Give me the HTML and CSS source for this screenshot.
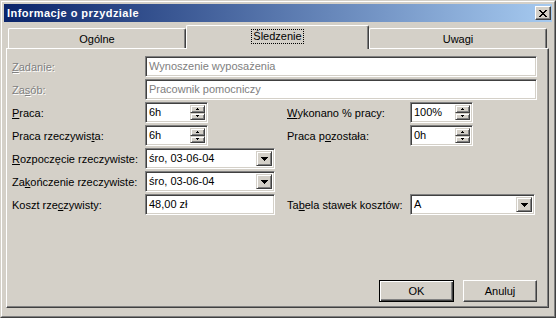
FILE: index.html
```html
<!DOCTYPE html>
<html lang="pl">
  <head>
    <meta charset="UTF-8" />
    <title>Informacje o przydziale</title>
    <link rel="stylesheet" href="styles.css">
  </head>
  <body>
    <div class="window">
      <div class="frame">
        <div class="titlebar">
          <span class="title">Informacje o przydziale</span>
          <div class="close">
            <svg width="8" height="7" viewBox="0 0 8 7" shape-rendering="crispEdges">
              <path d="M0 0h2v1H0zM6 0h2v1H6zM1 1h2v1H1zM5 1h2v1H5zM2 2h4v1H2zM3 3h2v1H3zM2 4h4v1H2zM1 5h2v1H1zM5 5h2v1H5zM0 6h2v1H0zM6 6h2v1H6z" fill="#000" />
            </svg>
          </div>
        </div>

        <div class="content">
          <div class="tabs">
            <div class="tab">Ogólne</div>
            <div class="tab active"><span class="focus">Śledzenie</span></div>
            <div class="tab">Uwagi</div>
          </div>

          <div class="panel">
            <div class="form">
              <div class="label disabled"><u>Z</u>adanie:</div>
              <div class="field wide"><span class="val gray">Wynoszenie wyposażenia</span></div>

              <div class="label disabled">Za<u>s</u>ób:</div>
              <div class="field wide"><span class="val gray">Pracownik pomocniczy</span></div>

              <div class="label"><u>P</u>raca:</div>
              <div class="field spin">
                <span class="val">6h</span>
                <div class="spin-btns">
                  <div class="raised"><svg width="3" height="2" viewBox="0 0 3 2" shape-rendering="crispEdges"><path d="M1 0h1v1H1zM0 1h3v1H0z" /></svg></div>
                  <div class="raised"><svg width="3" height="2" viewBox="0 0 3 2" shape-rendering="crispEdges"><path d="M0 0h3v1H0zM1 1h1v1H1z" /></svg></div>
                </div>
              </div>
              <div class="label right"><u>W</u>ykonano % pracy:</div>
              <div class="field spin">
                <span class="val">100%</span>
                <div class="spin-btns">
                  <div class="raised"><svg width="3" height="2" viewBox="0 0 3 2" shape-rendering="crispEdges"><path d="M1 0h1v1H1zM0 1h3v1H0z" /></svg></div>
                  <div class="raised"><svg width="3" height="2" viewBox="0 0 3 2" shape-rendering="crispEdges"><path d="M0 0h3v1H0zM1 1h1v1H1z" /></svg></div>
                </div>
              </div>

              <div class="label">Praca rzeczywis<u>t</u>a:</div>
              <div class="field spin">
                <span class="val">6h</span>
                <div class="spin-btns">
                  <div class="raised"><svg width="3" height="2" viewBox="0 0 3 2" shape-rendering="crispEdges"><path d="M1 0h1v1H1zM0 1h3v1H0z" /></svg></div>
                  <div class="raised"><svg width="3" height="2" viewBox="0 0 3 2" shape-rendering="crispEdges"><path d="M0 0h3v1H0zM1 1h1v1H1z" /></svg></div>
                </div>
              </div>
              <div class="label right">Praca p<u>o</u>została:</div>
              <div class="field spin">
                <span class="val">0h</span>
                <div class="spin-btns">
                  <div class="raised"><svg width="3" height="2" viewBox="0 0 3 2" shape-rendering="crispEdges"><path d="M1 0h1v1H1zM0 1h3v1H0z" /></svg></div>
                  <div class="raised"><svg width="3" height="2" viewBox="0 0 3 2" shape-rendering="crispEdges"><path d="M0 0h3v1H0zM1 1h1v1H1z" /></svg></div>
                </div>
              </div>

              <div class="label"><u>R</u>ozpoczęcie rzeczywiste:</div>
              <div class="field combo">
                <span class="val">śro, 03-06-04</span>
                <div class="raised drop"><svg width="7" height="4" viewBox="0 0 7 4" shape-rendering="crispEdges"><path d="M0 0h7v1H0zM1 1h5v1H1zM2 2h3v1H2zM3 3h1v1H3z" /></svg></div>
              </div>

              <div class="label">Za<u>k</u>ończenie rzeczywiste:</div>
              <div class="field combo">
                <span class="val">śro, 03-06-04</span>
                <div class="raised drop"><svg width="7" height="4" viewBox="0 0 7 4" shape-rendering="crispEdges"><path d="M0 0h7v1H0zM1 1h5v1H1zM2 2h3v1H2zM3 3h1v1H3z" /></svg></div>
              </div>

              <div class="label">Koszt rze<u>c</u>zywisty:</div>
              <div class="field text"><span class="val">48,00 zł</span></div>
              <div class="label right">Ta<u>b</u>ela stawek kosztów:</div>
              <div class="field combo rate">
                <span class="val">A</span>
                <div class="raised drop"><svg width="7" height="4" viewBox="0 0 7 4" shape-rendering="crispEdges"><path d="M0 0h7v1H0zM1 1h5v1H1zM2 2h3v1H2zM3 3h1v1H3z" /></svg></div>
              </div>
            </div>

            <div class="actions">
              <div class="btn default">OK</div>
              <div class="btn">Anuluj</div>
            </div>
          </div>
        </div>
      </div>
    </div>
  </body>
</html>
```

FILE: styles.css
```css
* {
  box-sizing: border-box;
}

body {
  margin: 0;
  background: #d4d0c8;
  font-family: "Liberation Sans", Arial, sans-serif;
  font-size: 11px;
  color: #000;
}

.window {
  width: 556px;
  height: 318px;
  background: #d4d0c8;
  border: 1px solid;
  border-color: #d4d0c8 #404040 #404040 #d4d0c8;
}

.frame {
  height: 100%;
  border: 1px solid;
  border-color: #fff #808080 #808080 #fff;
  padding: 2px;
  display: flex;
  flex-direction: column;
}

.titlebar {
  height: 18px;
  flex: none;
  background: linear-gradient(to right, #0a246a, #a6caf0);
  display: flex;
  align-items: center;
  justify-content: space-between;
  padding: 0 1px 0 3px;
}

.title {
  color: #fff;
  font-weight: bold;
  font-size: 11px;
  letter-spacing: 0.45px;
}

.raised {
  background: #d4d0c8;
  border: 1px solid;
  border-color: #d4d0c8 #404040 #404040 #d4d0c8;
  box-shadow: inset 1px 1px #fff, inset -1px -1px #808080;
  display: flex;
  align-items: center;
  justify-content: center;
}

.close {
  width: 16px;
  height: 14px;
  background: #d4d0c8;
  border: 1px solid;
  border-color: #fff #404040 #404040 #fff;
  box-shadow: inset -1px -1px #808080;
  display: flex;
  align-items: center;
  justify-content: center;
  padding-right: 1px;
}

.content {
  flex: 1;
  display: flex;
  flex-direction: column;
  padding: 3px 3px 6px 2px;
}

.tabs {
  height: 23px;
  flex: none;
  display: flex;
  align-items: flex-end;
  padding-left: 2px;
}

.tab {
  width: 178px;
  height: 20px;
  display: flex;
  align-items: center;
  justify-content: center;
  border-top: 1px solid #fff;
  border-left: 1px solid #fff;
  border-right: 1px solid #404040;
  box-shadow: inset -1px 0 #808080;
  border-radius: 2px 2px 0 0;
  padding-top: 1px;
}

.tab.active {
  width: 183px;
  height: 24px;
  margin-bottom: -1px;
  position: relative;
  z-index: 1;
  background: #d4d0c8;
  padding: 0 0 3px;
}

.focus {
  outline: 1px dotted #000;
  padding: 0 1px;
  line-height: 13px;
}

.panel {
  flex: 1;
  display: flex;
  flex-direction: column;
  border: 1px solid;
  border-color: #fff #404040 #404040 #fff;
  box-shadow: inset -1px -1px #808080;
  padding: 7px 11px 5px 5px;
}

.form {
  display: grid;
  grid-template-columns: 133px 130px 12px 123px 127px;
  grid-auto-rows: 21px;
  row-gap: 2px;
}

.label {
  grid-column: 1;
  display: flex;
  align-items: center;
  white-space: nowrap;
}

.label.right {
  grid-column: 4;
}

.label.disabled {
  color: #808080;
  text-shadow: 1px 1px #fff;
}

u {
  text-decoration-thickness: 1px;
  text-underline-offset: 1px;
}

.field {
  background: #fff;
  border: 1px solid;
  border-color: #808080 #fff #fff #808080;
  box-shadow: inset 1px 1px #404040, inset -1px -1px #d4d0c8;
  padding: 2px;
  display: flex;
  align-items: stretch;
}

.field.wide {
  grid-column: 2 / 6;
}

.val {
  flex: 1;
  line-height: 15px;
  padding-left: 1px;
  white-space: nowrap;
  overflow: hidden;
}

.val.gray {
  color: #808080;
}

.spin {
  width: 63px;
}

.spin-btns {
  width: 15px;
  display: flex;
  flex-direction: column;
}

.spin-btns .raised {
  flex: 1;
}

.combo {
  width: 130px;
}

.combo.rate {
  width: 125px;
}

.drop {
  width: 16px;
}

.actions {
  margin-top: auto;
  display: flex;
  justify-content: flex-end;
  gap: 9px;
}

.btn {
  width: 74px;
  height: 22px;
  display: flex;
  align-items: center;
  justify-content: center;
  background: #d4d0c8;
  border: 1px solid;
  border-color: #fff #404040 #404040 #fff;
  box-shadow: inset -1px -1px #808080;
}

.btn.default {
  width: 75px;
  border-color: #000;
  box-shadow: inset 1px 1px #fff, inset -1px -1px #404040, inset -2px -2px #808080;
}
```
